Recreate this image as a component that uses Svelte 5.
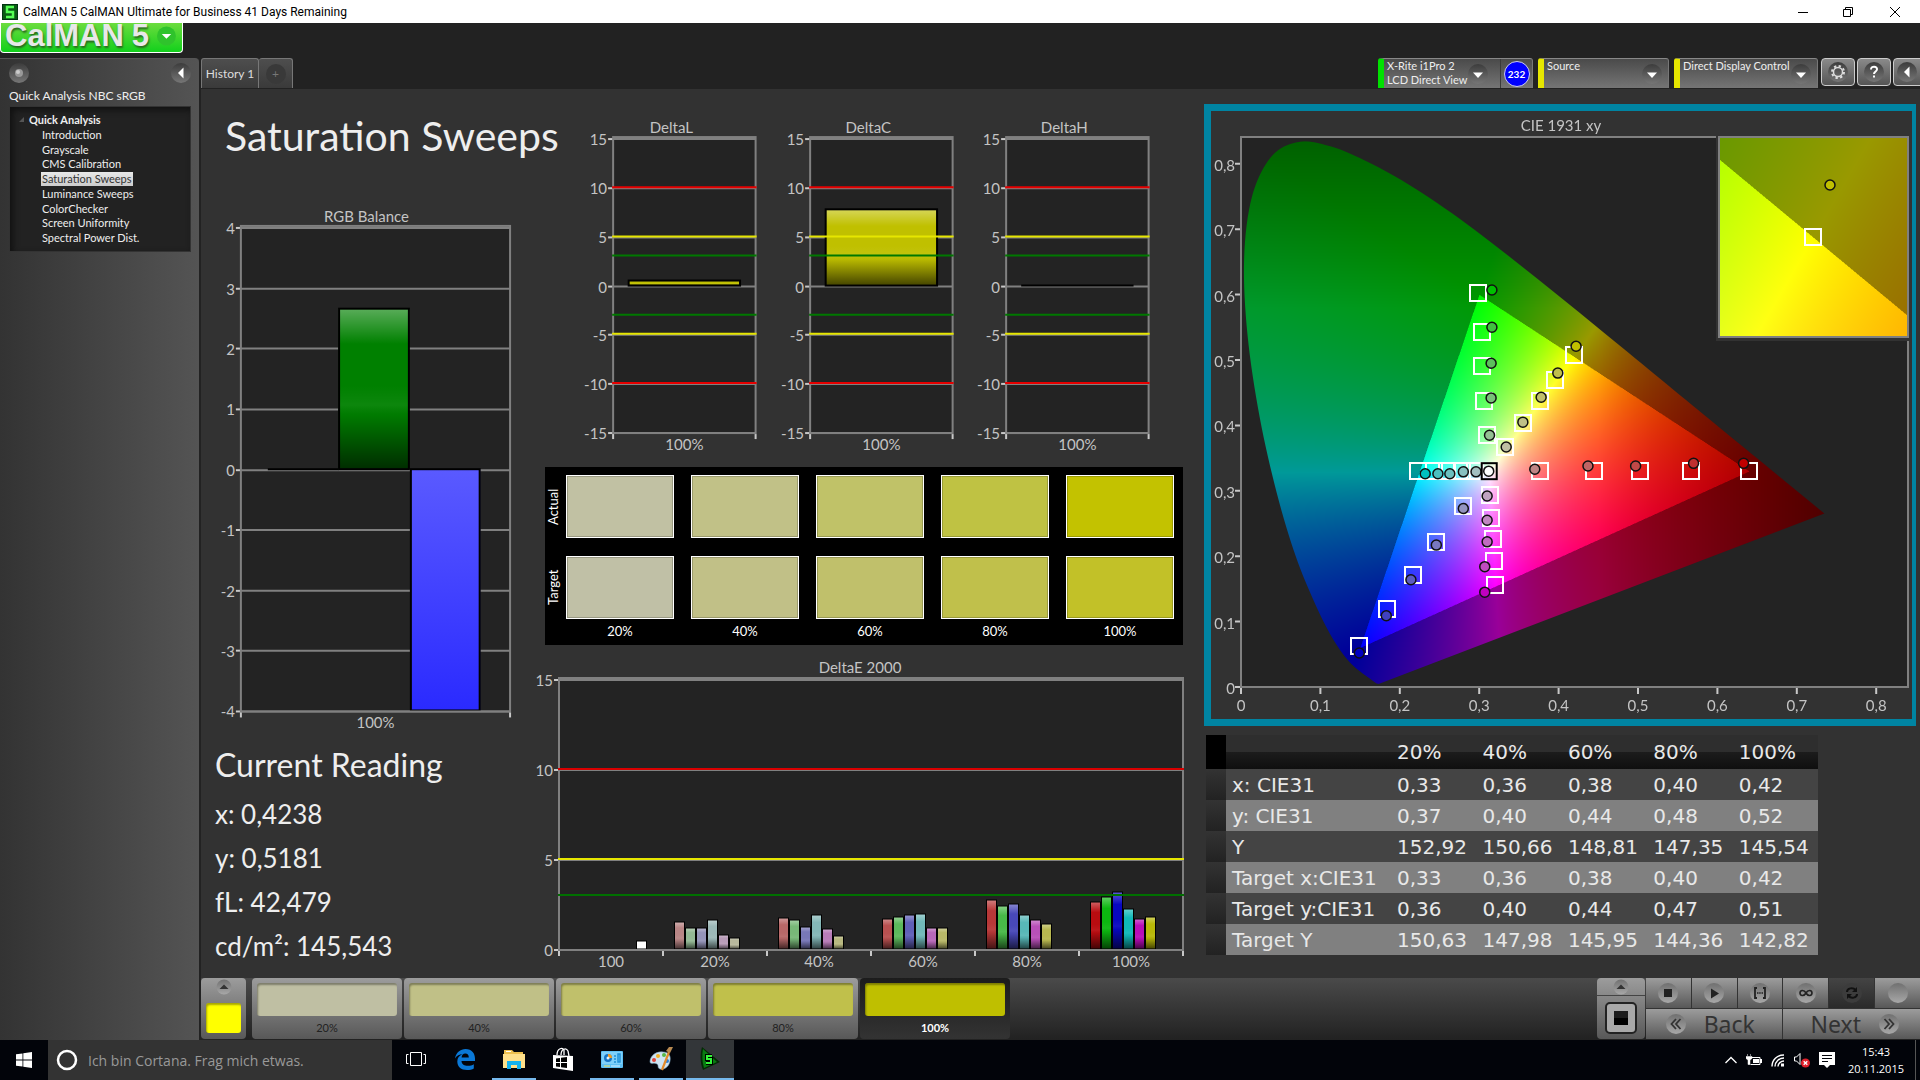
<script>
  import { onMount } from 'svelte';

  const pages = [
    'Introduction',
    'Grayscale',
    'CMS Calibration',
    'Saturation Sweeps',
    'Luminance Sweeps',
    'ColorChecker',
    'Screen Uniformity',
    'Spectral Power Dist.'
  ];
  let page = $state('Saturation Sweeps');

  const readings = ['x: 0,4238', 'y: 0,5181', 'fL: 42,479', 'cd/m²: 145,543'];
  const levels = ['20%', '40%', '60%', '80%', '100%'];
  const actual = ['#c1c1a3', '#c1c187', '#c0c268', '#bfc243', '#c3c200'];
  const target = ['#c0c0a6', '#c1c087', '#c0c06b', '#c0c04b', '#c2c128'];
  const patches = ['#bfbfa3', '#c0c087', '#c0c06b', '#c0c04b', '#bfbf00'];
  let patch = $state(4);

  const rows = [
    ['x: CIE31', '0,33', '0,36', '0,38', '0,40', '0,42'],
    ['y: CIE31', '0,37', '0,40', '0,44', '0,48', '0,52'],
    ['Y', '152,92', '150,66', '148,81', '147,35', '145,54'],
    ['Target x:CIE31', '0,33', '0,36', '0,38', '0,40', '0,42'],
    ['Target y:CIE31', '0,36', '0,40', '0,44', '0,47', '0,51'],
    ['Target Y', '150,63', '147,98', '145,95', '144,36', '142,82']
  ];

  // ---- bar charts ----
  const rgbChart = {
    title: 'RGB Balance', titleX: 166, titleY: 18, w: 336, h: 536,
    x: 40, y: 22, fw: 270, top: 24, bottom: 509,
    min: -4, max: 4, step: 1, limits: [], cats: ['100%'],
    bars: [
      { x: 67, w: 71, v: 0, color: '#c00000' },
      { x: 138, w: 71, v: 2.65, color: '#008000' },
      { x: 210, w: 70, v: -4, color: 'url(#blueBar)', flat: true }
    ]
  };

  const deltaLimits = [
    [10, '#e60000'], [5, '#e6e600'], [3, '#007800'],
    [-3, '#007800'], [-5, '#e6e600'], [-10, '#e60000']
  ];
  const delta = (title, v) => ({
    title, titleX: 95, titleY: 16, w: 196, h: 336,
    x: 37, y: 20, fw: 142, top: 22, bottom: 315,
    min: -15, max: 15, step: 5, limits: deltaLimits, cats: ['100%'],
    bars: [{ x: 52, w: 112, v, color: '#c0c000' }]
  });
  const deltaCharts = [delta('DeltaL', 0.5), delta('DeltaC', 7.7), delta('DeltaH', 0)];

  const sweeps = [
    { v: [1.5, 1.15, 1.15, 1.6, 0.8, 0.6], c: ['#b88585', '#94b894', '#9494b8', '#9cb8b8', '#b89cb8', '#b8b89c'] },
    { v: [1.75, 1.6, 1.25, 1.9, 1.1, 0.75], c: ['#b86868', '#78b878', '#7878b8', '#84b8b8', '#b87cb8', '#b8b880'] },
    { v: [1.65, 1.8, 1.9, 1.95, 1.15, 1.15], c: ['#b85050', '#5cb85c', '#6060b8', '#70b8b8', '#b868b8', '#b8b868'] },
    { v: [2.75, 2.4, 2.5, 1.9, 1.6, 1.4], c: ['#b83838', '#48b848', '#4848b8', '#58b8b8', '#b850b8', '#b8b850'] },
    { v: [2.6, 2.9, 3.15, 2.25, 1.65, 1.8], c: ['#b80c10', '#0cb810', '#0808c0', '#10b8b8', '#b80cb8', '#b8b808'] }
  ];
  const deltaE = {
    title: 'DeltaE 2000', titleX: 324, titleY: 18, w: 654, h: 320,
    x: 23, y: 23, fw: 624, top: 25, bottom: 295,
    min: 0, max: 15, step: 5,
    limits: [[10, '#d80000'], [5, '#e6e600'], [3, '#007000']],
    cats: ['100', ...levels],
    bars: [
      { x: 100, w: 11, v: 0.45, color: '#ffffff', flat: true },
      ...sweeps.flatMap((s, g) =>
        s.v.map((v, i) => ({ x: 138 + g * 104 + i * 11, w: 11, v, color: s.c[i] }))
      )
    ]
  };

  function py(c, v) {
    return Math.round(c.bottom - ((v - c.min) / (c.max - c.min)) * (c.bottom - c.top));
  }
  function ticks(c) {
    const out = [];
    for (let v = c.min; v <= c.max; v += c.step) out.push(v);
    return out;
  }

  // ---- CIE 1931 diagram ----
  const plot = { x: 30, y: 26, w: 667, h: 550, sx: 794, sy: 654 };
  const inset = { x: 508, y: 26, w: 189, h: 200, cx: 0.4193, cy: 0.5053, ox: 94, oy: 100, sx: 3780, sy: 3950 };
  const cx = (x) => plot.x + x * plot.sx;
  const cy = (y) => plot.y + plot.h - y * plot.sy;
  const comma = (n) => (n === 0 ? '0' : '0,' + n);

  const series = [
    {
      target: [[0.376, 0.33], [0.444, 0.33], [0.503, 0.33], [0.567, 0.33], [0.64, 0.33]],
      read: [[0.37, 0.333], [0.437, 0.338], [0.497, 0.338], [0.57, 0.342], [0.633, 0.342]],
      c: ['#c08585', '#c06464', '#c04848', '#c03030', '#c00000']
    },
    {
      target: [[0.295, 0.33], [0.278, 0.33], [0.26, 0.33], [0.243, 0.33], [0.223, 0.33]],
      read: [[0.296, 0.329], [0.28, 0.329], [0.263, 0.326], [0.248, 0.326], [0.232, 0.326]],
      c: ['#a3c0c0', '#87c0c0', '#6bc0c0', '#4bc0c0', '#00c0c0']
    },
    {
      target: [[0.31, 0.385], [0.306, 0.437], [0.304, 0.491], [0.303, 0.543], [0.299, 0.602]],
      read: [[0.313, 0.385], [0.315, 0.442], [0.315, 0.495], [0.316, 0.55], [0.316, 0.607]],
      c: ['#94c094', '#78c078', '#5cc05c', '#40c040', '#00c000']
    },
    {
      target: [[0.333, 0.367], [0.355, 0.403], [0.377, 0.437], [0.396, 0.469], [0.419, 0.507]],
      read: [[0.334, 0.367], [0.355, 0.405], [0.378, 0.443], [0.399, 0.48], [0.422, 0.521]],
      c: ['#c0c0a3', '#c0c087', '#c0c06b', '#c0c04b', '#c0c000']
    },
    {
      target: [[0.28, 0.277], [0.246, 0.222], [0.216, 0.172], [0.184, 0.12], [0.149, 0.062]],
      read: [[0.28, 0.273], [0.246, 0.217], [0.214, 0.164], [0.183, 0.109], [0.149, 0.052]],
      c: ['#9494c0', '#7878c0', '#5c5cc0', '#4040c0', '#0000c0']
    },
    {
      target: [[0.313, 0.294], [0.315, 0.258], [0.317, 0.226], [0.319, 0.193], [0.32, 0.156]],
      read: [[0.31, 0.292], [0.31, 0.255], [0.31, 0.222], [0.307, 0.184], [0.307, 0.145]],
      c: ['#c0a3c0', '#c087c0', '#c06bc0', '#c04bc0', '#c000c0']
    }
  ];

  // spectral locus, 380 nm to 700 nm
  const locus = [
    [0.1741, 0.005], [0.1733, 0.0048], [0.1714, 0.0051], [0.1689, 0.0069], [0.1644, 0.0109],
    [0.1566, 0.0177], [0.144, 0.0297], [0.1355, 0.0399], [0.1241, 0.0578], [0.1096, 0.0868],
    [0.0913, 0.1327], [0.0687, 0.2007], [0.0454, 0.295], [0.0235, 0.4127], [0.0082, 0.5384],
    [0.0039, 0.6548], [0.0139, 0.7502], [0.0389, 0.812], [0.0743, 0.8338], [0.1142, 0.8262],
    [0.1547, 0.8059], [0.1929, 0.7816], [0.2296, 0.7543], [0.2658, 0.7243], [0.3016, 0.6923],
    [0.3373, 0.6589], [0.3731, 0.6245], [0.4087, 0.5896], [0.4441, 0.5547], [0.4788, 0.5202],
    [0.5125, 0.4866], [0.5448, 0.4544], [0.5752, 0.4242], [0.6029, 0.3965], [0.627, 0.3725],
    [0.6482, 0.3514], [0.6658, 0.334], [0.6915, 0.3083], [0.714, 0.2859], [0.7347, 0.2653]
  ];

  const clamp = (v) => Math.min(1, Math.max(0, v));

  function colorAt(x, y) {
    const X = x / y;
    const Z = (1 - x - y) / y;
    let r = 3.2406 * X - 1.5372 - 0.4986 * Z;
    let g = -0.9689 * X + 1.8758 + 0.0415 * Z;
    let b = 0.0557 * X - 0.204 + 1.057 * Z;
    const outside = r < 0 || g < 0 || b < 0;
    const m = Math.max(r, g, b);
    let k = outside ? 0.6 : 1;
    k *= 1 - 0.47 * clamp((x - 0.45) / 0.28);
    k *= 1 - 0.36 * clamp((y - 0.58) / 0.25);
    return [r, g, b].map((v) => clamp(v / m) * k * 255);
  }

  function shade(w, h, toXY) {
    const c = document.createElement('canvas');
    c.width = w;
    c.height = h;
    const ctx = c.getContext('2d');
    const img = ctx.createImageData(w, h);
    for (let j = 0; j < h; j++) {
      for (let i = 0; i < w; i++) {
        const [x, y] = toXY(i, j);
        const p = (j * w + i) * 4;
        const rgb = colorAt(x, Math.max(y, 0.001));
        img.data[p] = rgb[0];
        img.data[p + 1] = rgb[1];
        img.data[p + 2] = rgb[2];
        img.data[p + 3] = 255;
      }
    }
    ctx.putImageData(img, 0, 0);
    return c;
  }

  let canvas;

  onMount(() => {
    const ctx = canvas.getContext('2d');
    ctx.scale(2, 2);
    ctx.fillStyle = '#232323';
    ctx.fillRect(plot.x, plot.y, plot.w, plot.h);

    const horseshoe = shade(plot.w * 2, plot.h * 2, (i, j) => [
      i / 2 / plot.sx,
      (plot.h - j / 2) / plot.sy
    ]);
    ctx.save();
    ctx.beginPath();
    // Catmull-Rom through the samples
    const pts = locus.map(([x, y]) => [cx(x), cy(y)]);
    ctx.moveTo(pts[0][0], pts[0][1]);
    for (let i = 0; i < pts.length - 1; i++) {
      const a = pts[Math.max(i - 1, 0)];
      const b = pts[i];
      const c = pts[i + 1];
      const d = pts[Math.min(i + 2, pts.length - 1)];
      ctx.bezierCurveTo(
        b[0] + (c[0] - a[0]) / 6, b[1] + (c[1] - a[1]) / 6,
        c[0] - (d[0] - b[0]) / 6, c[1] - (d[1] - b[1]) / 6,
        c[0], c[1]
      );
    }
    ctx.closePath();
    ctx.clip();
    ctx.drawImage(horseshoe, plot.x, plot.y, plot.w, plot.h);
    ctx.restore();

    ctx.fillStyle = '#323232';
    ctx.fillRect(inset.x - 3, inset.y - 2, inset.w + 6, inset.h + 6);
    const detail = shade(inset.w * 2, inset.h * 2, (i, j) => [
      inset.cx + (i / 2 - inset.ox) / inset.sx,
      inset.cy - (j / 2 - inset.oy) / inset.sy
    ]);
    ctx.drawImage(detail, inset.x, inset.y, inset.w, inset.h);
  });
</script>

{#snippet chart(c)}
  <svg class="chart" viewBox="0 0 {c.w} {c.h}" role="img" aria-label={c.title}>
    <text x={c.titleX} y={c.titleY} text-anchor="middle">{c.title}</text>
    <rect x={c.x} y={c.y} width={c.fw} height={c.bottom - c.y} fill="#232323" />
    {#each ticks(c) as t}
      <path d="M{c.x} {py(c, t)}h{c.fw}" stroke="#808080" stroke-width="2" />
      <path d="M{c.x - 5} {py(c, t)}h5" stroke="#c8c8c8" stroke-width="2" />
      <text x={c.x - 6} y={py(c, t) + 6} text-anchor="end">{t}</text>
    {/each}
    {#each c.bars as b}
      {@const y0 = py(c, 0) - 1}
      {@const y1 = py(c, b.v) - 1}
      {@const y = Math.min(y0, y1)}
      {@const h = Math.abs(y1 - y0)}
      <rect x={b.x} {y} width={b.w} height={h} fill={b.color} />
      {#if !b.flat}
        <rect x={b.x} {y} width={b.w} height={h} fill="url(#gloss)" />
      {/if}
      {#if h > 0}
        <rect x={b.x + 0.5} {y} width={b.w - 1} height={h} fill="none" stroke="#000" stroke-width={b.w > 20 ? 2 : 1} />
      {:else}
        <path d="M{b.x} {y}h{b.w}" stroke="#000" stroke-width="2" />
      {/if}
    {/each}
    <rect x={c.x} y={c.y} width={c.fw} height={c.bottom - c.y} fill="none" stroke="#808080" stroke-width="2" />
    {#each c.limits as [v, color]}
      <path d="M{c.x - 1} {py(c, v) - 1}h{c.fw + 2}" stroke={color} stroke-width="2" />
    {/each}
    {#each c.cats as cat, i}
      {@const step = c.fw / c.cats.length}
      <path d="M{c.x + i * step} {c.bottom + 1}v5" stroke="#c8c8c8" stroke-width="2" />
      <text x={c.x + (i + 0.5) * step} y={c.bottom + 17} text-anchor="middle">{cat}</text>
    {/each}
    <path d="M{c.x + c.fw} {c.bottom + 1}v5" stroke="#c8c8c8" stroke-width="2" />
  </svg>
{/snippet}

{#snippet arrow()}
  <svg class="round" viewBox="0 0 20 20" width="20" height="20" aria-hidden="true">
    <circle cx="10" cy="10" r="10" fill="url(#knobDark)" />
    <path d="M5 8.500h10l-5 5.500z" fill="#fff" />
  </svg>
{/snippet}

<svg width="0" height="0" class="defs" aria-hidden="true">
  <defs>
    <linearGradient id="gloss" x1="0" y1="0" x2="0" y2="1">
      <stop offset="0" stop-color="#fff" stop-opacity=".35" />
      <stop offset=".22" stop-color="#fff" stop-opacity="0" />
      <stop offset=".48" stop-color="#fff" stop-opacity="0" />
      <stop offset=".6" stop-color="#fff" stop-opacity=".05" />
      <stop offset=".66" stop-color="#000" stop-opacity=".04" />
      <stop offset="1" stop-color="#000" stop-opacity=".65" />
    </linearGradient>
    <linearGradient id="blueBar" x1="0" y1="0" x2="0" y2="1">
      <stop offset="0" stop-color="#5a5aff" />
      <stop offset="1" stop-color="#2a2aff" />
    </linearGradient>
    <linearGradient id="knobDark" x1="0" y1="0" x2="0" y2="1">
      <stop offset="0" stop-color="#3c3c3c" />
      <stop offset="1" stop-color="#767676" />
    </linearGradient>
    <linearGradient id="knob" x1="0" y1="0" x2="0" y2="1">
      <stop offset="0" stop-color="#707070" />
      <stop offset="1" stop-color="#a8a8a8" />
    </linearGradient>
  </defs>
</svg>

<div class="app">
  <header class="titlebar">
    <svg viewBox="0 0 16 16" width="16" height="16" aria-hidden="true">
      <rect width="16" height="16" fill="#031" />
      <rect x="1" y="1" width="14" height="14" fill="#0a5a14" />
      <path d="M12 3H5v5h6v5H4" fill="none" stroke="#5f5" stroke-width="2.500" />
    </svg>
    <span>CalMAN 5 CalMAN Ultimate for Business 41 Days Remaining</span>
    <div class="wincontrols">
      <button aria-label="Minimize"><svg width="10" height="10"><path d="M0 5.500h10" stroke="#000" /></svg></button>
      <button aria-label="Restore">
        <svg width="10" height="10"><path d="M.5 2.500h7v7h-7zM2.500 2.500v-2h7v7h-2" fill="none" stroke="#000" /></svg>
      </button>
      <button aria-label="Close"><svg width="10" height="10"><path d="M0 0l10 10M10 0L0 10" stroke="#000" /></svg></button>
    </div>
  </header>

  <div class="logobar">
    <button class="logo">
      <span>CalMAN</span><span>5</span>
      <svg viewBox="0 0 20 20" width="20" height="20" aria-hidden="true">
        <circle cx="10" cy="10" r="10" fill="#2fc32c" />
        <path d="M5 8h10l-5 5z" fill="#fff" />
      </svg>
    </button>
  </div>

  <div class="body">
    <aside>
      <div class="side-top">
        <button aria-label="Options">
          <svg viewBox="0 0 20 20" width="20" height="20">
            <circle cx="10" cy="10" r="10" fill="url(#knobDark)" />
            <circle cx="10" cy="10" r="4" fill="#999" />
            <circle cx="9" cy="9" r="2" fill="#ccc" />
          </svg>
        </button>
        <button aria-label="Collapse panel">
          <svg viewBox="0 0 20 20" width="20" height="20">
            <circle cx="10" cy="10" r="10" fill="url(#knobDark)" />
            <path d="M12.500 4.500v11L7 10z" fill="#fff" />
          </svg>
        </button>
      </div>
      <h2>Quick Analysis NBC sRGB</h2>
      <nav class="tree">
        <div class="root">
          <svg width="6" height="6" aria-hidden="true"><path d="M5 0v5H0z" fill="#555" /></svg>
          Quick Analysis
        </div>
        <ul>
          {#each pages as p}
            <li><button class:selected={p === page} onclick={() => (page = p)}>{p}</button></li>
          {/each}
        </ul>
      </nav>
    </aside>

    <div class="work">
      <div class="toolbar">
        <div class="tabs">
          <button class="tab">History 1</button>
          <button class="tab add" aria-label="Add history"><span>+</span></button>
        </div>
        <div class="devices">
          <div class="device meter">
            <button class="pick"><span>X-Rite i1Pro 2<br />LCD Direct View</span>{@render arrow()}</button>
            <div class="count"><span>232</span></div>
          </div>
          <button class="device pick source"><span>Source</span>{@render arrow()}</button>
          <button class="device pick display"><span>Direct Display Control</span>{@render arrow()}</button>
          <button class="square" aria-label="Settings">
            <svg viewBox="0 0 20 20" width="20" height="20">
              <circle cx="10" cy="10" r="10" fill="url(#knobDark)" />
              <circle cx="10" cy="10" r="4.500" fill="none" stroke="#ddd" stroke-width="1.500" />
              <circle cx="10" cy="10" r="6" fill="none" stroke="#ddd" stroke-width="2" stroke-dasharray="2.350 2.350" />
            </svg>
          </button>
          <button class="square" aria-label="Help">
            <svg viewBox="0 0 20 20" width="20" height="20">
              <circle cx="10" cy="10" r="10" fill="url(#knobDark)" />
              <path d="M7 7.500C7 3.500 13.500 4 13 7.500C12.800 9.500 10 9.500 10 12" fill="none" stroke="#fff" stroke-width="2" />
              <rect x="9" y="13.500" width="2" height="2" fill="#fff" />
            </svg>
          </button>
          <button class="square last" aria-label="Collapse toolbar">
            <svg viewBox="0 0 20 20" width="20" height="20">
              <circle cx="10" cy="10" r="10" fill="url(#knobDark)" />
              <path d="M12.500 4.500v11L7 10z" fill="#fff" />
            </svg>
          </button>
        </div>
      </div>

      <main>
        <section class="left">
          <h1>Saturation Sweeps</h1>
          {@render chart(rgbChart)}
          <div class="reading">
            <h2>Current Reading</h2>
            {#each readings as r}
              <p>{r}</p>
            {/each}
          </div>
        </section>

        <section class="middle">
          <div class="deltas">
            {#each deltaCharts as c}
              {@render chart(c)}
            {/each}
          </div>
          <div class="swatches">
            <span class="side">Actual</span>
            {#each actual as c}
              <div class="swatch" style="background: {c}"></div>
            {/each}
            <span class="side second">Target</span>
            {#each target as c}
              <div class="swatch second" style="background: {c}"></div>
            {/each}
            <span></span>
            {#each levels as l}
              <span class="level">{l}</span>
            {/each}
          </div>
          {@render chart(deltaE)}
        </section>

        <section class="right">
          <div class="cie">
            <canvas bind:this={canvas} width="1402" height="1216"></canvas>
            <svg class="chart" viewBox="0 0 701 608" role="img" aria-label="CIE 1931 xy">
              <text x="350" y="20" text-anchor="middle">CIE 1931 xy</text>
              <path d="M{inset.x - 3} {plot.y}H{plot.x}V{plot.y + plot.h}H{plot.x + plot.w}V{inset.y + inset.h + 4}" fill="none" stroke="#808080" stroke-width="2" />
              {#each [0, 1, 2, 3, 4, 5, 6, 7, 8] as n}
                <path d="M{cx(n / 10)} {plot.y + plot.h + 1}v6M{plot.x - 1} {cy(n / 10)}h-5" stroke="#c8c8c8" stroke-width="2" />
                <text x={cx(n / 10)} y={plot.y + plot.h + 24} text-anchor="middle">{comma(n)}</text>
                <text x={plot.x - 6} y={cy(n / 10) + 7} text-anchor="end">{comma(n)}</text>
              {/each}
              {#each series as s}
                {#each s.target as [x, y]}
                  <rect x={Math.round(cx(x)) - 8} y={Math.round(cy(y)) - 8} width="16" height="16" fill="none" stroke="#fff" stroke-width="2" />
                {/each}
              {/each}
              {#each series as s}
                {#each s.read as [x, y], i}
                  <circle cx={cx(x)} cy={cy(y)} r="5" fill={s.c[i]} stroke="#111" stroke-width="1.500" />
                {/each}
              {/each}
              <rect x={cx(0.312) - 7} y={cy(0.33) - 8} width="15" height="16" fill="none" stroke="#000" stroke-width="2" />
              <circle cx={cx(0.312)} cy={cy(0.33)} r="5" fill="#fff" stroke="#111" stroke-width="1.500" />
              <rect x={inset.x} y={inset.y} width={inset.w} height={inset.h} fill="none" stroke="#808080" stroke-width="2" />
              <rect x={inset.x + 86} y={inset.y + 92} width="16" height="16" fill="none" stroke="#fff" stroke-width="2" />
              <circle cx={inset.x + 111} cy={inset.y + 48} r="5" fill="#c0c000" stroke="#111" stroke-width="1.500" />
            </svg>
          </div>

          <table>
            <thead>
              <tr>
                <td class="gutter"></td>
                <th></th>
                {#each levels as l}
                  <th scope="col">{l}</th>
                {/each}
              </tr>
            </thead>
            <tbody>
              {#each rows as row}
                <tr>
                  <td class="gutter"></td>
                  <th scope="row">{row[0]}</th>
                  {#each row.slice(1) as v}
                    <td>{v}</td>
                  {/each}
                </tr>
              {/each}
            </tbody>
          </table>
        </section>
      </main>

      <footer class="strip">
        <button class="current" aria-label="Pattern color">
          <svg viewBox="0 0 16 16" width="16" height="16">
            <circle cx="8" cy="8" r="7.500" fill="url(#knob)" />
            <path d="M3.500 10h9L8 5.500z" fill="#333" />
          </svg>
          <span class="color"></span>
        </button>
        <div class="patches">
          {#each levels as l, i}
            <button class="patch" class:active={i === patch} onclick={() => (patch = i)}>
              <span class="color" style="background: {patches[i]}"></span>
              {l}
            </button>
          {/each}
        </div>
        <div class="transport">
          <div class="window">
            <button aria-label="Expand">
              <svg viewBox="0 0 16 16" width="16" height="16">
                <circle cx="8" cy="8" r="7.500" fill="url(#knob)" />
                <path d="M3.500 10h9L8 5.500z" fill="#333" />
              </svg>
            </button>
            <button aria-label="Pattern window">
              <svg viewBox="0 0 32 32" width="32" height="32">
                <rect x="1" y="1" width="30" height="30" rx="4" fill="#a8a8a8" stroke="#222" stroke-width="2" />
                <rect x="9" y="9" width="14" height="14" fill="#000" />
                <rect x="9" y="9" width="14" height="7" fill="#1c1c1c" />
              </svg>
            </button>
          </div>
          <div class="keys">
            <button aria-label="Stop">
              <svg viewBox="0 0 20 20" width="20" height="20"><circle cx="10" cy="10" r="10" fill="url(#knob)" /><rect x="6" y="6" width="8" height="8" fill="#222" /></svg>
            </button>
            <button aria-label="Play">
              <svg viewBox="0 0 20 20" width="20" height="20"><circle cx="10" cy="10" r="10" fill="url(#knob)" /><path d="M7 5.500v10l8-5z" fill="#222" /></svg>
            </button>
            <button aria-label="Read series">
              <svg viewBox="0 0 20 20" width="20" height="20">
                <circle cx="10" cy="10" r="10" fill="url(#knob)" />
                <path d="M7 5H5v10h2M13 5h2v10h-2" fill="none" stroke="#222" stroke-width="1.800" />
                <path d="M7 10h1.500M9.200 10h1.500M11.500 10h1.500" stroke="#222" stroke-width="1.500" />
              </svg>
            </button>
            <button aria-label="Read continuously">
              <svg viewBox="0 0 20 20" width="20" height="20">
                <circle cx="10" cy="10" r="10" fill="url(#knob)" />
                <path d="M10 10C8 6.500 4 7 4 10s4 3.500 6 0s6-3 6 0s-4 3.500-6 0z" fill="none" stroke="#222" stroke-width="1.600" />
              </svg>
            </button>
            <button class="down" aria-label="Refresh">
              <svg viewBox="0 0 20 20" width="20" height="20">
                <circle cx="10" cy="10" r="10" fill="#3c3c3c" />
                <path d="M5 9c0-4 6-5 8.500-2M15 11c0 4-6 5-8.500 2" fill="none" stroke="#111" stroke-width="2" />
                <path d="M15 4v5h-5zM5 16v-5h5z" fill="#111" />
              </svg>
            </button>
            <button aria-label="Status">
              <svg viewBox="0 0 20 20" width="20" height="20"><circle cx="10" cy="10" r="10" fill="url(#knob)" /></svg>
            </button>
            <button class="wide back">
              <svg viewBox="0 0 20 20" width="20" height="20" aria-hidden="true"><circle cx="10" cy="10" r="10" fill="url(#knob)" /><path d="M10 5l-4.500 5l4.500 5M14.500 5L10 10l4.500 5" fill="none" stroke="#333" stroke-width="1.800" /></svg>
              Back
            </button>
            <button class="wide next">
              Next
              <svg viewBox="0 0 20 20" width="20" height="20" aria-hidden="true"><circle cx="10" cy="10" r="10" fill="url(#knob)" /><path d="M5.500 5l4.500 5l-4.500 5M10 5l4.500 5l-4.500 5" fill="none" stroke="#333" stroke-width="1.800" /></svg>
            </button>
          </div>
        </div>
      </footer>
    </div>
  </div>

  <footer class="taskbar">
    <button class="start" aria-label="Start">
      <svg viewBox="0 0 16 16" width="16" height="16"><path d="M0 2.300L6.500 1.400V7.600H0zM7.300 1.300L16 0V7.600H7.300zM0 8.400h6.500v6.200L0 13.700zM7.300 8.400H16V16l-8.700-1.300z" fill="#fff" /></svg>
    </button>
    <label class="search">
      <svg viewBox="0 0 22 22" width="22" height="22" aria-hidden="true"><circle cx="11" cy="11" r="9" fill="none" stroke="#fff" stroke-width="2.500" /></svg>
      <input type="text" placeholder="Ich bin Cortana. Frag mich etwas." aria-label="Suche" />
    </label>
    <div class="apps">
      <button aria-label="Task View">
        <svg viewBox="0 0 20 16" width="20" height="16"><path d="M4.500 1.500h11v13h-11zM2.500 3.500h-2v9h2M17.500 3.500h2v9h-2" fill="none" stroke="#fff" /></svg>
      </button>
      <button aria-label="Edge">
        <svg viewBox="0 0 20 21" width="20" height="21"><path d="M0 9.500C1 3.500 5.500 0 10.500 0C17 0 20 4.500 20 9.500v2.500H6.500c.2 3.300 3 4.800 6.300 4.800c2.500 0 4.500-.7 6-1.600v4.200C17.200 20.400 14.700 21 12 21C6 21 2.300 17.500 2.300 12.500c0-3.400 1.900-6 5-7.200C4.600 5.300 1.800 6.600 0 9.500zM6.600 8.500h7.200c0-2.500-1.300-3.900-3.500-3.900c-2.100 0-3.500 1.600-3.700 3.900z" fill="#0a78d7" /></svg>
      </button>
      <button class="open" aria-label="Explorer">
        <svg viewBox="0 0 22 19" width="22" height="19">
          <path d="M1 0h8l2 2h9v4H1z" fill="#eec04e" /><path d="M3 1h5v1H3z" fill="#fff" /><path d="M0 4h22v14H0z" fill="#ffe08a" />
          <path d="M4 11h14v8h-4v-4H8v4H4z" fill="#15b2ee" />
        </svg>
      </button>
      <button aria-label="Store">
        <svg viewBox="0 0 22 24" width="22" height="24">
          <path d="M1 8l20 1v15L1 21z" fill="#fff" /><path d="M5 8c0-7 6-8 7-5v5M9 8c0-6 5-8 7-4l1 5" fill="none" stroke="#fff" stroke-width="1.300" />
          <path d="M4 11.500l4-.5v4H4zM9 10.800l6-.8v5H9zM4 16h4v4l-4-.5zM9 16h6v5l-6-.8z" fill="#000" />
        </svg>
      </button>
      <button class="open" aria-label="Control Panel">
        <svg viewBox="0 0 22 17" width="22" height="17">
          <rect width="22" height="17" rx="1" fill="#5fc0f5" /><rect x="1" y="1" width="20" height="12" fill="#7fd0fa" />
          <circle cx="7" cy="7" r="4" fill="#1673c4" /><path d="M7 7V3a4 4 0 0 1 4 4z" fill="#f29a1f" /><circle cx="7" cy="7" r="1.500" fill="#dff3ff" />
          <path d="M13 5h2M13 8h2M13 11h2M17 3h2v8h-2z" fill="none" stroke="#1f8fd6" stroke-width="1.500" /><path d="M3 15h6" stroke="#f5e05a" /><path d="M10 15h9" stroke="#dff3ff" />
        </svg>
      </button>
      <button class="open" aria-label="Paint">
        <svg viewBox="0 0 24 24" width="24" height="24">
          <path d="M1 15C1 9 7 4 14 5c6 0 8 4 7 9c-1 6-6 9-10 8c-3-1-1-4-3-5c-3-2-6 1-7-2z" fill="#cfe4f3" stroke="#7aa3bf" stroke-width=".6" />
          <circle cx="5" cy="13" r="2" fill="#e0453a" /><circle cx="9" cy="9" r="2" fill="#f2b227" /><circle cx="15" cy="8" r="2" fill="#57b847" /><circle cx="18" cy="14" r="2" fill="#2f7fd0" />
          <path d="M20 5L13 23" stroke="#e28a2b" stroke-width="2.200" /><path d="M17 4l3-4h4l-3 6z" fill="#b98a52" />
        </svg>
      </button>
      <button class="open focused" aria-label="CalMAN">
        <svg viewBox="0 0 20 24" width="20" height="24">
          <path d="M2 0l18 15L3 23C0 16 0 7 2 0z" fill="#042a05" /><path d="M3 2l14 13L4 21C2 14 2 8 3 2z" fill="#0a7a12" />
          <path d="M12 9H7v3h4v4H6" fill="none" stroke="#000" stroke-width="4" /><path d="M12 9H7v3h4v4H6" fill="none" stroke="#35f53a" stroke-width="2" />
        </svg>
      </button>
    </div>
    <div class="tray">
      <svg viewBox="0 0 12 8" width="12" height="8"><path d="M.5 7L6 1.500L11.500 7" fill="none" stroke="#fff" stroke-width="1.300" /></svg>
      <svg viewBox="0 0 16 12" width="16" height="12"><path d="M5 3.500h9v7H4.500" fill="none" stroke="#fff" /><rect x="7" y="5" width="6" height="4" fill="#fff" /><rect x="14" y="5" width="2" height="4" fill="#fff" /><path d="M1.500 0v2M4.500 0v2M0 2.500h6v2L4 6v4.500h-2V6L0 4.500z" fill="#fff" stroke="#fff" stroke-width=".5" /></svg>
      <svg viewBox="0 0 14 13" width="14" height="13"><path d="M1 12.500C1 6 6 1 13 1M4 12.500C4 8 8 4 13 4M7 12.500C7 9.500 10 7 13 7" fill="none" stroke="#fff" stroke-width="1.400" /><rect x="10" y="9.500" width="3" height="3" fill="#fff" /></svg>
      <svg viewBox="0 0 16 15" width="16" height="15"><path d="M.5 4h2l3.500-3.500v11L2.500 8h-2z" fill="none" stroke="#fff" /><circle cx="11.500" cy="10" r="4.500" fill="#e0202b" /><path d="M9.700 8.200l3.600 3.600M13.300 8.200l-3.600 3.600" stroke="#fff" stroke-width="1.300" /></svg>
      <svg viewBox="0 0 16 16" width="16" height="16"><path d="M0 0h16v13h-5l-3 3l-3-3H0z" fill="#fff" /><path d="M3 3.500h10M3 6.500h10M3 9.500h6" stroke="#02040a" /></svg>
      <time>15:43<br />20.11.2015</time>
      <button class="desktop" aria-label="Show desktop"></button>
    </div>
  </footer>
</div>

<style>
  :global(body) {
    margin: 0;
    background: #222;
  }
  .app {
    display: flex;
    flex-direction: column;
    min-height: 100vh;
    font-family: Lato, 'Open Sans', sans-serif;
    color: #eee;
    background: #222;
    overflow: hidden;
  }
  button {
    font: inherit;
    color: inherit;
    border: 0;
    margin: 0;
    padding: 0;
    background: none;
    cursor: pointer;
  }
  svg,
  canvas {
    display: block;
  }
  .defs {
    position: absolute;
  }
  h1,
  h2,
  p,
  ul {
    margin: 0;
    padding: 0;
    font-weight: normal;
    list-style: none;
  }

  .titlebar {
    display: flex;
    align-items: center;
    gap: 5px;
    height: 23px;
    padding-left: 2px;
    background: #fff;
    color: #000;
    font: 12px Roboto, 'Open Sans', sans-serif;
  }
  .wincontrols {
    display: flex;
    margin-left: auto;
    align-self: stretch;
  }
  .wincontrols button {
    width: 45px;
    display: grid;
    place-items: center;
  }
  .wincontrols button:last-child {
    width: 50px;
  }

  .logobar {
    height: 35px;
  }
  .logo {
    display: flex;
    align-items: center;
    gap: 8px;
    width: 183px;
    height: 30px;
    padding: 0 6px 3px 4px;
    overflow: hidden;
    border: solid #fff;
    border-width: 0 1px 1px;
    border-radius: 0 0 4px 4px;
    background: linear-gradient(#6cdc3e, #12d01c);
    color: #e8e8e8;
    font: bold 31px/26px 'Liberation Sans', sans-serif;
    text-shadow: 1px 2px 2px #2a6a20;
  }
  .logo svg {
    margin-left: auto;
  }

  .body {
    display: flex;
    flex: 1;
  }
  aside {
    box-sizing: border-box;
    width: 199px;
    padding: 4px 8px 0 9px;
    background: linear-gradient(90deg, #333, #545454);
    border-top: 1px solid #555;
    border-radius: 0 4px 0 0;
  }
  .side-top {
    display: flex;
    justify-content: space-between;
  }
  aside h2 {
    margin: 4px 0 1px;
    font-size: 12px;
    line-height: 18px;
  }
  .tree {
    padding: 5px 0 6px 9px;
    background: #222;
    border: 1px solid #333;
    box-shadow: inset 3px 3px 6px #111;
    font-size: 11px;
    line-height: 15px;
  }
  .root {
    display: flex;
    align-items: center;
    gap: 4px;
    font-weight: bold;
  }
  .tree ul {
    display: flex;
    flex-direction: column;
    justify-content: space-between;
    min-height: 117px;
    padding: 1px 0 0 22px;
  }
  .tree li {
    display: flex;
  }
  .tree li button {
    padding: 0 1px;
    white-space: nowrap;
    line-height: 14px;
  }
  .tree .selected {
    background: linear-gradient(#e8e8e8, #ccc);
    color: #333;
  }

  .work {
    flex: 1;
    min-width: 0;
    display: flex;
    flex-direction: column;
    padding-left: 2px;
  }
  .toolbar {
    display: flex;
    justify-content: space-between;
    height: 30px;
  }
  .tabs,
  .devices {
    display: flex;
  }
  .tab {
    width: 58px;
    box-sizing: border-box;
    border: solid #777;
    border-width: 1px 1px 0;
    border-radius: 3px 3px 0 0;
    background: linear-gradient(#4e4e4e, #3a3a3a);
    font-size: 12px;
    white-space: nowrap;
    color: #ddd;
  }
  .tab.add {
    width: 34px;
    border-left: 0;
    display: grid;
    place-items: center;
  }
  .tab.add span {
    width: 20px;
    line-height: 20px;
    border-radius: 50%;
    background: #393939;
    color: #777;
  }
  .devices {
    gap: 5px;
  }
  .device {
    display: flex;
    box-sizing: border-box;
    border-top: 1px solid #888;
    border-right: 1px solid #777;
    border-left: 6px solid #e6e600;
    border-radius: 3px 3px 0 0;
    background: linear-gradient(#4a4a4a, #757575);
  }
  .meter {
    width: 155px;
    border-left-color: #00e000;
  }
  .source {
    width: 131px;
  }
  .display {
    width: 144px;
    margin-right: -2px;
  }
  .pick {
    flex: 1 1 auto;
    display: flex;
    justify-content: space-between;
    align-items: flex-start;
    padding: 0 6px 0 3px;
    text-align: left;
    font-size: 11px;
    line-height: 14px;
    white-space: nowrap;
  }
  .meter .pick {
    padding-right: 12px;
  }
  .device.pick {
    flex: none;
  }
  .round {
    flex: none;
    margin-top: 5px;
  }
  .count {
    display: grid;
    place-items: center;
    width: 31px;
    border-left: 1px solid #3a3a3a;
  }
  .count span {
    width: 24px;
    line-height: 24px;
    border: 1px solid #cce;
    border-radius: 50%;
    background: #00f;
    color: #fff;
    text-align: center;
    font-size: 10px;
    font-weight: bold;
  }
  .square {
    display: grid;
    place-items: center;
    width: 34px;
    height: 28px;
    margin-right: -3px;
    border: 1px solid #ccc;
    border-radius: 4px;
    background: linear-gradient(#8a8a8a, #555);
  }
  .square.last {
    width: 28px;
    margin-right: -1px;
    border-radius: 4px 0 0 4px;
  }

  main {
    flex: 1;
    display: grid;
    grid-template-columns: minmax(0, 335fr) minmax(0, 654fr) minmax(0, 730fr);
    background: #323232;
    border-top: 1px solid #222;
  }
  .chart {
    width: 100%;
    height: auto;
    fill: #c4c4c4;
    font-size: 15px;
  }
  h1 {
    padding: 19px 0 0 24px;
    font-size: 41px;
    line-height: 56px;
    white-space: nowrap;
  }
  .left > .chart {
    margin-top: 40px;
  }
  .reading {
    padding-left: 14px;
    font-size: 26px;
    line-height: 44px;
    white-space: nowrap;
  }
  .reading h2 {
    font-size: 32px;
    line-height: 54px;
  }

  .middle {
    padding-top: 28px;
  }
  .deltas {
    display: grid;
    grid-template-columns: repeat(3, 1fr);
    padding: 0 24px 0 40px;
  }
  .swatches {
    display: grid;
    grid-template-columns: 4px repeat(5, 1fr);
    column-gap: 17px;
    margin: 13px 7px 10px 9px;
    padding: 8px 9px 2px 0;
    background: #000;
    font-size: 13px;
    color: #fff;
  }
  .swatch {
    height: 61px;
    border: 1px solid #fff;
    box-shadow: inset 0 0 0 1px rgba(0, 0, 0, 0.2);
  }
  .second {
    margin-top: 18px;
  }
  .side {
    writing-mode: vertical-rl;
    transform: rotate(180deg);
    line-height: 16px;
    width: 16px;
    text-align: center;
  }
  .level {
    text-align: center;
    line-height: 24px;
  }

  .right {
    padding: 15px 4px 0 14px;
  }
  .cie {
    display: grid;
    border: solid #0084a2;
    border-width: 7px 4px 7px 7px;
  }
  .cie > * {
    grid-area: 1 / 1;
    width: 100%;
    height: auto;
  }
  table {
    margin: 9px 0 0 2px;
    width: 86%;
    table-layout: fixed;
    border-collapse: collapse;
    font: 20px 'DejaVu Sans', sans-serif;
    color: #e8e8e8;
  }
  th,
  td {
    height: 31px;
    padding: 0 0 0 6px;
    box-sizing: border-box;
    font-weight: normal;
    text-align: left;
    white-space: nowrap;
  }
  thead th {
    height: 34px;
    background: linear-gradient(#2e2e2e 50%, #1c1c1c 50%, #0f0f0f);
  }
  thead th:nth-child(2) {
    width: 165px;
  }
  thead .gutter {
    width: 20px;
    background: #000;
  }
  tbody tr {
    background: #444;
  }
  tbody tr:nth-child(even) {
    background: #808080;
  }
  tbody .gutter {
    background: linear-gradient(#333, #222);
  }

  .strip {
    display: flex;
    height: 61px;
    border-bottom: 1px solid #222;
    background: linear-gradient(#4a4a4a, #222);
  }
  .current,
  .patch,
  .window,
  .keys button {
    background: linear-gradient(#9c9c9c, #585858);
    border-radius: 4px;
  }
  .current {
    width: 45px;
    margin-right: 6px;
    display: flex;
    flex-direction: column;
    align-items: center;
    gap: 8px;
    padding-top: 1px;
  }
  .color {
    display: block;
    border-radius: 3px;
    box-shadow: inset 1px 2px 2px rgba(0, 0, 0, 0.35);
  }
  .current .color {
    width: 35px;
    height: 30px;
    background: #ff0;
  }
  .patches {
    display: flex;
    gap: 2px;
  }
  .patch {
    width: 150px;
    padding: 5px 5px 0;
    display: flex;
    flex-direction: column;
    align-items: stretch;
    font-size: 11px;
    line-height: 22px;
    color: #222;
  }
  .patch .color {
    height: 36px;
    margin-bottom: 1px;
  }
  .patch.active {
    background: linear-gradient(#1c1c1c, #333);
    color: #fff;
    font-weight: bold;
  }
  .transport {
    display: flex;
    gap: 1px;
    margin-left: auto;
    width: 323px;
  }
  .window {
    width: 48px;
    display: flex;
    flex-direction: column;
  }
  .window button {
    display: grid;
    place-items: center;
  }
  .window button:first-child {
    height: 18px;
    border-bottom: 1px solid #444;
  }
  .window button:last-child {
    flex: 1;
  }
  .keys {
    flex: 1;
    display: grid;
    grid-template: 30px 30px / repeat(6, 1fr);
    gap: 1px;
    background: #333;
  }
  .keys button {
    display: flex;
    align-items: center;
    justify-content: center;
    border-radius: 0;
  }
  .keys .down {
    background: linear-gradient(#444, #2a2a2a);
  }
  .keys .wide {
    grid-column: span 3;
    gap: 18px;
    color: #333;
    font: 23px/28px 'Noto Sans', sans-serif;
  }
  .keys .back {
    padding-right: 8px;
  }
  .keys .next {
    padding-left: 6px;
  }

  .taskbar {
    display: flex;
    height: 40px;
    background: #02040a;
  }
  .start {
    width: 48px;
    display: grid;
    place-items: center;
  }
  .search {
    display: flex;
    align-items: center;
    gap: 10px;
    box-sizing: border-box;
    width: 344px;
    padding-left: 8px;
    background: #333;
  }
  .search input {
    flex: 1;
    padding: 0;
    border: 0;
    outline: 0;
    background: none;
    color: #ddd;
    font: 14px 'Open Sans', sans-serif;
  }
  .search input::placeholder {
    color: #999;
    opacity: 1;
  }
  .apps {
    display: flex;
    gap: 1px;
  }
  .apps button {
    width: 48px;
    display: grid;
    place-items: center;
    border-bottom: 2px solid transparent;
  }
  .apps .open {
    border-image: linear-gradient(90deg, transparent 4px, #76b9ed 4px 44px, transparent 44px) 2;
  }
  .apps .focused {
    background: #333639;
    border-image: none;
    border-color: #76b9ed;
  }
  .tray {
    display: flex;
    align-items: center;
    gap: 9px;
    margin-left: auto;
  }
  .tray time {
    padding: 0 2px 0 4px;
    text-align: center;
    font: 11px/17px 'Open Sans', sans-serif;
    color: #fff;
  }
  .desktop {
    align-self: stretch;
    width: 5px;
    border-left: 1px solid #555;
  }
</style>
